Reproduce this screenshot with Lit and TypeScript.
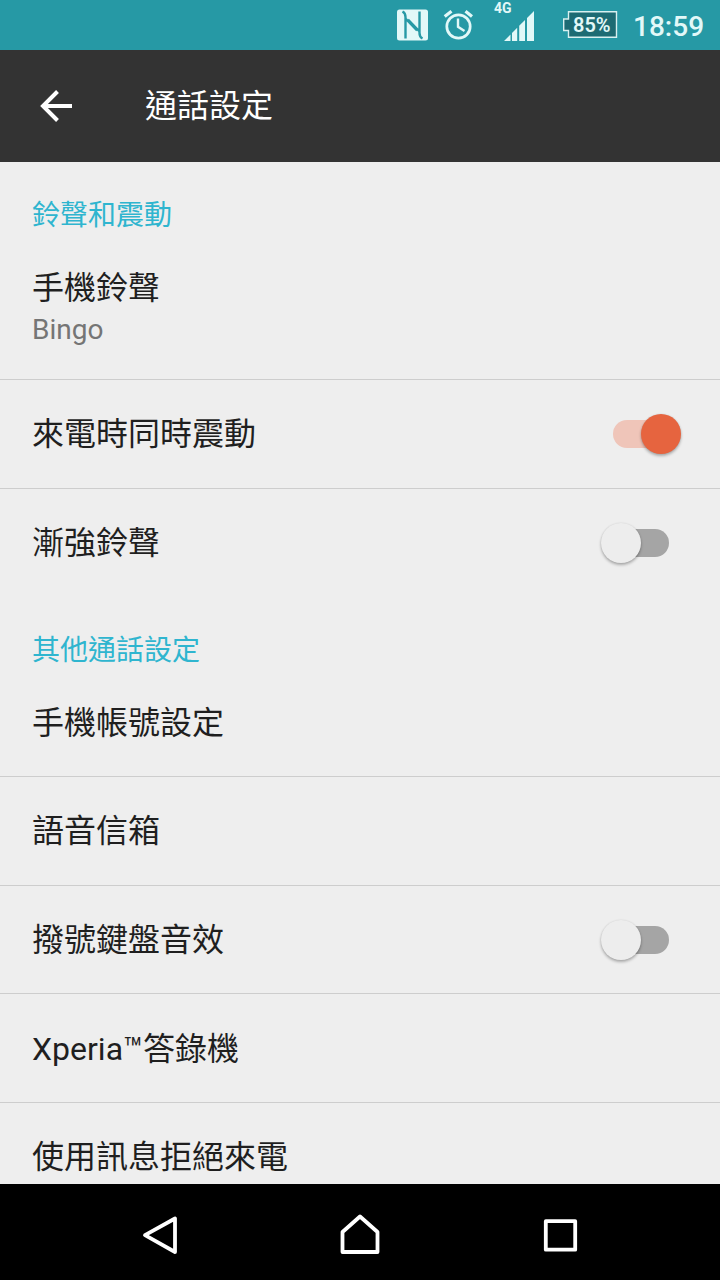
import { LitElement, html, css, nothing } from "lit";
import { customElement, property } from "lit/decorators.js";

interface Row {
  title: string;
  summary?: string;
  toggle?: boolean;
}

interface Section {
  heading: string;
  rows: Row[];
}

const SECTIONS: Section[] = [
  {
    heading: "鈴聲和震動",
    rows: [
      { title: "手機鈴聲", summary: "Bingo" },
      { title: "來電時同時震動", toggle: true },
      { title: "漸強鈴聲", toggle: false },
    ],
  },
  {
    heading: "其他通話設定",
    rows: [
      { title: "手機帳號設定" },
      { title: "語音信箱" },
      { title: "撥號鍵盤音效", toggle: false },
      { title: "Xperia™答錄機" },
      { title: "使用訊息拒絕來電" },
    ],
  },
];

@customElement("toggle-switch")
export class ToggleSwitch extends LitElement {
  @property({ type: Boolean, reflect: true }) on = false;

  static styles = css`
    :host {
      display: block;
      width: 56px;
      height: 28px;
      margin-right: 51px;
      border-radius: 14px;
      background: #a5a5a5;
    }
    :host([on]) {
      background: #efc5b9;
    }
    .thumb {
      width: 40px;
      height: 40px;
      margin: -6px 0 0 -12px;
      border-radius: 50%;
      background: #ededed;
      box-shadow: 0 2px 3px rgba(0, 0, 0, 0.28), 0 0 2px rgba(0, 0, 0, 0.1);
    }
    :host([on]) .thumb {
      margin-left: 28px;
      background: #e6643f;
    }
  `;

  render() {
    return html`<div class="thumb"></div>`;
  }
}

@customElement("status-bar")
export class StatusBar extends LitElement {
  static styles = css`
    :host {
      display: flex;
      height: 50px;
      background: #2699a5;
      color: #e2f8f8;
    }
    svg {
      display: block;
    }
    .nfc {
      margin: 9px 0 0 397px;
    }
    .alarm {
      margin: 9px 0 0 15px;
    }
    .signal {
      width: 42px;
      margin: 0 0 0 21px;
    }
    .network {
      font: 700 14px/17px Roboto, sans-serif;
      height: 17px;
    }
    .bars {
      margin-top: -6px;
    }
    .battery {
      display: grid;
      margin: 10px 0 0 27px;
      width: 56px;
      height: 28px;
    }
    .battery > * {
      grid-area: 1 / 1;
    }
    .percent {
      padding-left: 10px;
      font: 600 20px/31px Roboto, sans-serif;
    }
    .clock {
      margin: 9px 0 0 14px;
      font: 500 28px/36px Roboto, sans-serif;
      white-space: nowrap;
    }
  `;

  render() {
    return html`
      <svg class="nfc" width="31" height="32" viewBox="0 0 31 32">
        <rect width="31" height="31" y=".5" rx="2.500" fill="#e2f8f8" />
        <path
          d="M5.500 2.500Q8.500 4 8.500 8V29.500M8.500 9.500L20 21.500M25.500 29.500Q22.500 28 22.500 24V2.500M22.500 22.500L11 10.500"
          fill="none"
          stroke="#2699a5"
          stroke-width="2.400"
        />
      </svg>
      <svg class="alarm" width="30" height="32" viewBox="0 0 30 32" fill="none" stroke="#e2f8f8" stroke-width="2.700">
        <circle cx="15.500" cy="17.500" r="11.700" />
        <path d="M1.700 7.500L8.500 2.200M22.500 2.200L29 7.500" stroke-width="3.200" />
        <path d="M15 9.500V17.800L21.500 22" stroke-width="2.400" />
      </svg>
      <div class="signal">
        <div class="network">4G</div>
        <svg class="bars" width="42" height="31" viewBox="0 0 42 31">
          <path d="M10 30L16.500 23.500V30ZM18 22L23.200 16.800V30H18ZM25.200 14.800L31 9V30H25.200ZM33 7L40 0V30H33Z" fill="#e2f8f8" />
        </svg>
      </div>
      <div class="battery">
        <svg width="56" height="28" viewBox="0 0 56 28">
          <path d="M5.500 1.700H53.500V27.300H5.500V20.500H.700V9H5.500Z" fill="#1d6b73" stroke="#d8f0f0" stroke-width="1.400" />
        </svg>
        <div class="percent">85%</div>
      </div>
      <div class="clock">18:59</div>
    `;
  }
}

@customElement("navigation-bar")
export class NavigationBar extends LitElement {
  static styles = css`
    :host {
      display: flex;
      justify-content: center;
      height: 96px;
      padding-top: 26px;
      box-sizing: border-box;
      background: #000;
    }
    .key {
      width: 200px;
      display: flex;
      justify-content: center;
    }
    svg {
      display: block;
    }
  `;

  render() {
    return html`
      <div class="key">
        <svg width="50" height="50" viewBox="0 0 50 50" fill="none" stroke="#fff" stroke-width="3.800" stroke-linejoin="round">
          <path d="M10 25.200L40 8.500V42Z" />
        </svg>
      </div>
      <div class="key">
        <svg width="50" height="50" viewBox="0 0 50 50" fill="none" stroke="#fff" stroke-width="3.800" stroke-linejoin="round">
          <path d="M25 6.500L42.500 22V42H7.500V22Z" />
        </svg>
      </div>
      <div class="key">
        <svg width="50" height="50" viewBox="0 0 50 50" fill="none" stroke="#fff" stroke-width="3.800" stroke-linejoin="round">
          <path d="M10.800 11.200H40.200V39.700H10.800Z" />
        </svg>
      </div>
    `;
  }
}

@customElement("app-root")
export class AppRoot extends LitElement {
  static styles = css`
    :host {
      display: flex;
      flex-direction: column;
      width: 720px;
      height: 1280px;
      overflow: hidden;
      background: #eee;
      font-family: Roboto, "Noto Sans CJK TC", sans-serif;
      color: #1f1f1f;
    }
    .toolbar {
      display: flex;
      align-items: center;
      height: 112px;
      box-sizing: border-box;
      padding-left: 40px;
      background: #333;
      color: #fff;
    }
    .title {
      margin: 0 0 0 72px;
      font-size: 32px;
      line-height: 48px;
      font-weight: 400;
    }
    .list {
      flex: 1;
      min-height: 0;
      overflow: hidden;
    }
    .heading {
      height: 71px;
      box-sizing: border-box;
      margin: 0;
      padding: 34px 32px 0;
      font-size: 28px;
      line-height: 40px;
      font-weight: 400;
      color: #2fb5cf;
    }
    .row {
      display: flex;
      align-items: center;
      justify-content: space-between;
      height: 108.700px;
      box-sizing: border-box;
      padding: 1px 0 0 32px;
      border-bottom: 1px solid #cdcdcd;
    }
    .row.detailed {
      height: 147px;
      padding-top: 0;
    }
    .row.last {
      border-bottom-color: transparent;
    }
    .label {
      font-size: 32px;
      line-height: 48px;
    }
    .summary {
      font-size: 28px;
      line-height: 36px;
      color: #757575;
    }
  `;

  private renderRow(row: Row, last: boolean) {
    return html`
      <div class="row ${row.summary ? "detailed" : ""} ${last ? "last" : ""}">
        <div>
          <div class="label">${row.title}</div>
          ${row.summary ? html`<div class="summary">${row.summary}</div>` : nothing}
        </div>
        ${row.toggle === undefined ? nothing : html`<toggle-switch ?on=${row.toggle}></toggle-switch>`}
      </div>
    `;
  }

  render() {
    return html`
      <status-bar></status-bar>
      <header class="toolbar">
        <svg width="33" height="32" viewBox="0 0 33 32" fill="none" stroke="#fff" stroke-width="4">
          <path d="M32 16H3M17.500 1.500L3 16L17.500 30.500" />
        </svg>
        <h1 class="title">通話設定</h1>
      </header>
      <main class="list">
        ${SECTIONS.map(
          (section) => html`
            <h2 class="heading">${section.heading}</h2>
            ${section.rows.map((row, i) => this.renderRow(row, i === section.rows.length - 1))}
          `,
        )}
      </main>
      <navigation-bar></navigation-bar>
    `;
  }
}
